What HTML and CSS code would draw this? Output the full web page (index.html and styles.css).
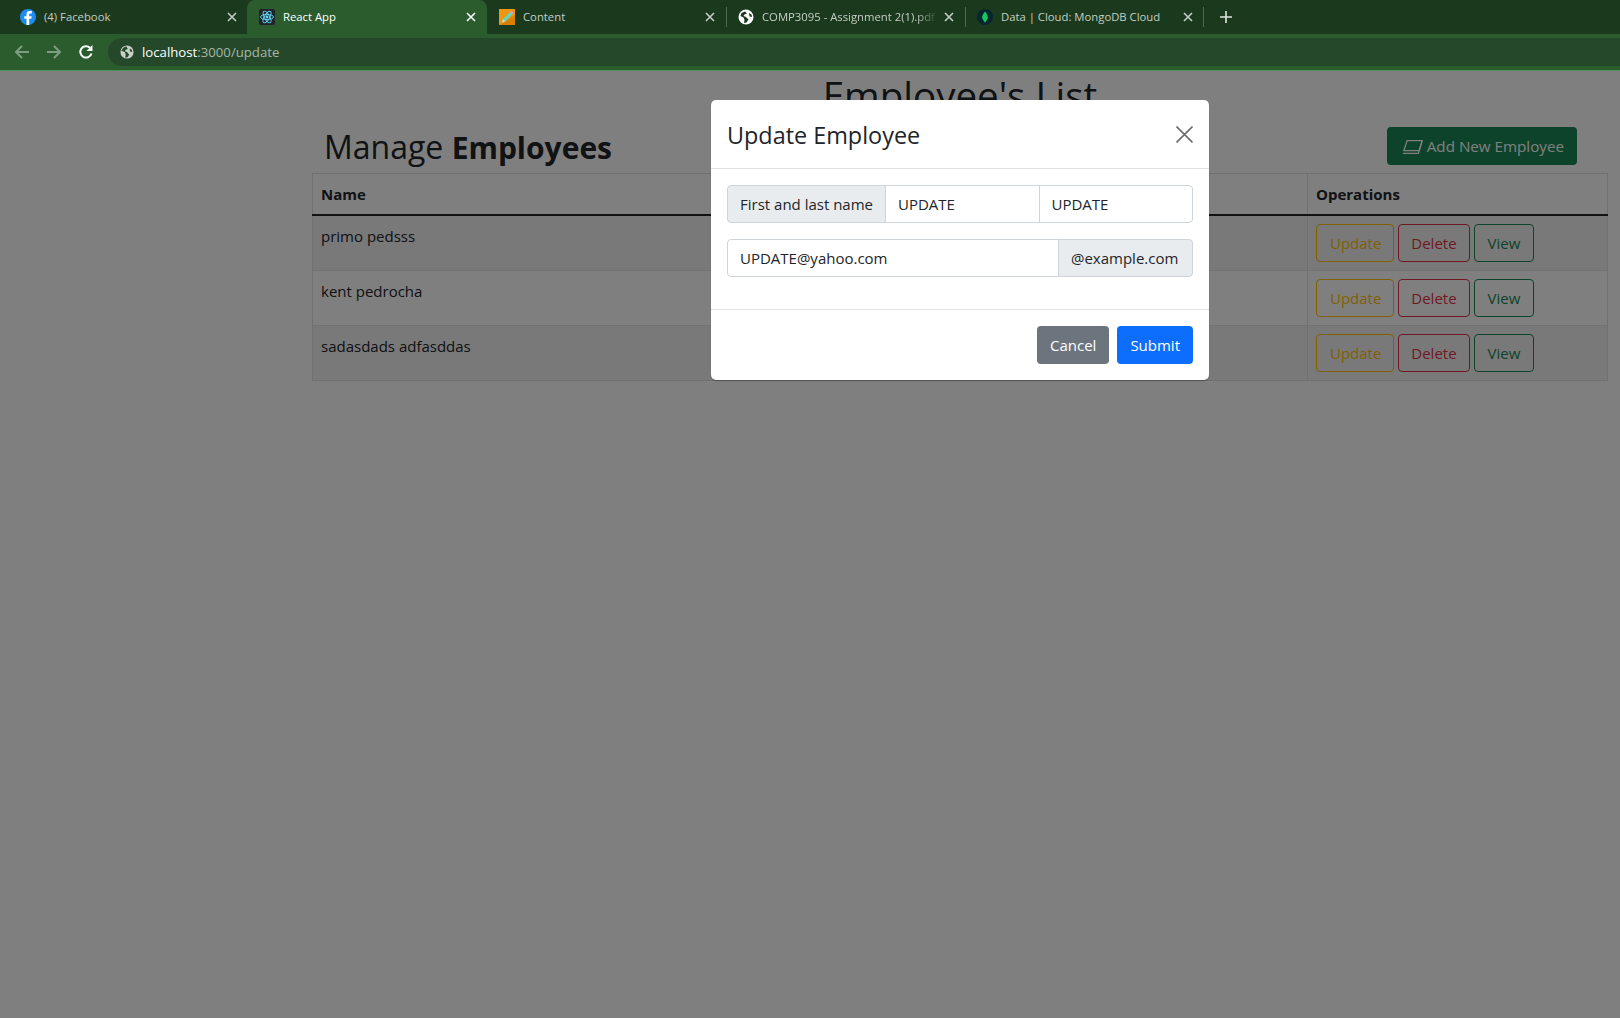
FILE: index.html
```html
<!DOCTYPE html>
<html lang="en">
<head>
    <meta charset="UTF-8">
    <title>React App</title>
    <link rel="stylesheet" href="styles.css">
</head>
<body>

<div class="tabstrip">
    <div class="tab tab-first">
        <svg class="favicon" viewBox="0 0 16 16"><circle cx="8" cy="8" r="8" fill="#1b8cf2"/><path d="M9.200 16V9.800h2.100l.4-2.600H9.200V5.700c0-.8.3-1.300 1.400-1.300h1.200V2.100c-.4 0-1.200-.1-2-.1C7.900 2 6.500 3.100 6.500 5.300v1.900H4.300v2.600h2.200V16z" fill="#fff"/></svg>
        <span class="tab-title">(4) Facebook</span>
        <svg class="tab-close" viewBox="0 0 10 10"><path d="M1 1l8 8M9 1l-8 8"/></svg>
    </div>
    <div class="tab tab-active">
        <svg class="favicon" viewBox="0 0 16 16"><rect width="16" height="16" rx="2" fill="#20232a"/><g fill="none" stroke="#61dafb" stroke-width=".9"><ellipse cx="8" cy="8" rx="6.500" ry="2.600"/><ellipse cx="8" cy="8" rx="6.500" ry="2.600" transform="rotate(60 8 8)"/><ellipse cx="8" cy="8" rx="6.500" ry="2.600" transform="rotate(120 8 8)"/></g><circle cx="8" cy="8" r="1.400" fill="#61dafb"/></svg>
        <span class="tab-title">React App</span>
        <svg class="tab-close" viewBox="0 0 10 10"><path d="M1 1l8 8M9 1l-8 8"/></svg>
    </div>
    <div class="tab">
        <svg class="favicon" viewBox="0 0 16 16"><rect width="16" height="16" fill="#f0960f"/><path d="M0 16L16 6v10z" fill="#d97f08"/><path d="M3 13.500l1-3.300L11 3l2.300 2.300-7 7.100z" fill="#63d6c0"/><path d="M11 3l1.300-1.200 2.200 2.200-1.200 1.300z" fill="#c9a0e8"/><path d="M3 13.500l1-3.300 2.300 2.200z" fill="#f6d8b0"/></svg>
        <span class="tab-title">Content</span>
        <svg class="tab-close" viewBox="0 0 10 10"><path d="M1 1l8 8M9 1l-8 8"/></svg>
    </div>
    <div class="tab tab-sep">
        <svg class="favicon" viewBox="0 0 16 16"><circle cx="8" cy="8" r="7.500" fill="#fff"/><path d="M7 2.500L3.500 4 2.500 7l3 1.500 1 2.500-.5 3 2.500-.5 2-3-2.500-2.500L5.500 7l1-1.500L9 4.500zM11 4l2.500 1.500.5 2.500-2.500-.5z" fill="#1b3a1d"/></svg>
        <span class="tab-title tab-fade">COMP3095 - Assignment 2(1).pdf</span>
        <svg class="tab-close" viewBox="0 0 10 10"><path d="M1 1l8 8M9 1l-8 8"/></svg>
    </div>
    <div class="tab tab-sep tab-last">
        <svg class="favicon" viewBox="0 0 16 16"><circle cx="8" cy="8" r="8" fill="#06262f"/><path d="M8 2.500C10 5 10.800 6.800 10.800 8.500 10.800 10.500 9 11.800 8.200 13.500H7.800C7 11.800 5.200 10.500 5.200 8.500 5.200 6.800 6 5 8 2.500z" fill="#13c85f"/></svg>
        <span class="tab-title">Data | Cloud: MongoDB Cloud</span>
        <svg class="tab-close" viewBox="0 0 10 10"><path d="M1 1l8 8M9 1l-8 8"/></svg>
    </div>
    <svg class="new-tab" viewBox="0 0 12 12"><path d="M6 0v12M0 6h12"/></svg>
</div>

<div class="toolbar">
    <svg class="nav-icon nav-off" viewBox="0 0 16 16"><path d="M15 8H2M8 2L2 8l6 6"/></svg>
    <svg class="nav-icon nav-off" viewBox="0 0 16 16"><path d="M1 8h13M8 2l6 6-6 6"/></svg>
    <svg class="nav-icon" viewBox="0 0 16 16"><path d="M13.500 9.500A5.700 5.700 0 1 1 12 3.800"/><path class="nav-fill" d="M14.500 1v6h-6z"/></svg>
    <div class="omnibox">
        <svg class="globe" viewBox="0 0 16 16"><circle cx="8" cy="8" r="7.500" fill="#c8d0c8"/><path d="M7 1.500L3.500 3.500 1.500 6.500l4 1.500 1 2.500-.5 4 2.500-.5 2-3L8 8 5.500 7l1-1.500L9 4.500zM11 4l2.500 1.500.5 2.500-2.500-.5z" fill="#26482a"/></svg>
        <span class="url-host">localhost</span><span class="url-rest">:3000/update</span>
    </div>
</div>

<div class="page">
    <div class="content">
        <h1 class="page-title">Employee's List</h1>

        <div class="table-head">
            <h2 class="manage">Manage <b>Employees</b></h2>
            <button class="btn btn-add">
                <svg class="add-icon" viewBox="0 0 19 13"><path d="M4.500 .6h14l-3 9.300H1.500z"/><path d="M.6 12.400h14.400l3.400-11"/></svg>
                Add New Employee
            </button>
        </div>

        <table class="employees">
            <thead>
                <tr><th class="col-name">Name</th><th>Operations</th></tr>
            </thead>
            <tbody id="rows"></tbody>
        </table>
    </div>

    <div class="backdrop"></div>

    <div class="modal">
        <div class="modal-header">
            <h3 class="modal-title">Update Employee</h3>
            <svg class="modal-close" viewBox="0 0 16 16"><path d="M.5 .5l15 15M15.500 .5l-15 15"/></svg>
        </div>
        <div class="modal-body">
            <div class="input-group">
                <span class="addon addon-left">First and last name</span>
                <input class="field field-a" type="text" value="UPDATE">
                <input class="field field-b" type="text" value="UPDATE">
            </div>
            <div class="input-group">
                <input class="field field-email" type="text" value="UPDATE@yahoo.com">
                <span class="addon addon-right">@example.com</span>
            </div>
        </div>
        <div class="modal-footer">
            <button class="btn btn-cancel">Cancel</button>
            <button class="btn btn-submit">Submit</button>
        </div>
    </div>
</div>

<script>
    // Employees shown in the table
    const employees = ['primo pedsss', 'kent pedrocha', 'sadasdads adfasddas'];

    const rows = document.getElementById('rows');
    employees.forEach(name => {
        rows.innerHTML += `
            <tr>
                <td>${name}</td>
                <td class="ops">
                    <button class="btn btn-update">Update</button>
                    <button class="btn btn-delete">Delete</button>
                    <button class="btn btn-view">View</button>
                </td>
            </tr>
        `;
    });
</script>

</body>
</html>
```

FILE: styles.css
```css
* {
    box-sizing: border-box;
}

html, body {
    height: 100%;
}

body {
    margin: 0;
    display: flex;
    flex-direction: column;
    overflow: hidden;
    font-family: 'Open Sans', 'Noto Sans', sans-serif;
    font-size: 15px;
    color: #212529;
    background-color: #fff;
}

/* browser tabs */
.tabstrip {
    height: 34px;
    flex: none;
    display: flex;
    align-items: stretch;
    background-color: #1b3a1d;
}

.tab {
    width: 239px;
    padding: 0 11px 0 12px;
    display: flex;
    align-items: center;
    font-size: 11.300px;
    color: #c3cdc3;
}

.tab-first {
    width: 247px;
    padding: 0 10px 0 20px;
}

.tab-active {
    width: 240px;
    background-color: #2a5c2e;
    border-radius: 8px 8px 0 0;
    color: #fff;
}

.tab-sep {
    position: relative;
}

.tab-sep::before,
.tab-last::after {
    content: '';
    position: absolute;
    top: 7px;
    left: 0;
    width: 1px;
    height: 20px;
    background-color: #4e6a50;
}

.tab-last::after {
    left: auto;
    right: 0;
}

.favicon {
    width: 16px;
    height: 16px;
    flex: none;
    margin-right: 8px;
}

.tab-title {
    flex: 1;
    margin-top: -2px;
    white-space: nowrap;
    overflow: hidden;
}

.tab-fade {
    -webkit-mask-image: linear-gradient(to right, #000 88%, transparent);
    mask-image: linear-gradient(to right, #000 88%, transparent);
}

.tab-close {
    width: 10px;
    height: 10px;
    flex: none;
    margin-left: 6px;
    fill: none;
    stroke: currentColor;
    stroke-width: 1.600;
}

.new-tab {
    width: 12px;
    height: 12px;
    margin: 11px 0 0 16px;
    fill: none;
    stroke: #dfe5df;
    stroke-width: 1.600;
}

/* address bar */
.toolbar {
    height: 37px;
    flex: none;
    display: flex;
    align-items: center;
    padding: 0 0 1px 14px;
    background-color: #2a5c2e;
    border-bottom: 1px solid #4f8f58;
}

.nav-icon {
    width: 16px;
    height: 16px;
    margin-right: 16px;
    fill: none;
    stroke: #fff;
    stroke-width: 2;
}

.nav-off {
    stroke: #7f9c81;
}

.nav-fill {
    fill: #fff;
    stroke: none;
}

.omnibox {
    flex: 1;
    height: 28px;
    margin-left: -2px;
    padding-left: 12px;
    display: flex;
    align-items: center;
    border-radius: 14px 0 0 14px;
    background-color: #26482a;
    font-size: 13.200px;
}

.globe {
    width: 14px;
    height: 14px;
    margin-right: 8px;
}

.url-host {
    color: #fff;
}

.url-rest {
    color: #a7b6a8;
}

/* page under the modal */
.page {
    flex: 1;
    position: relative;
}

.content {
    margin: 0 12px 0 312px;
}

.page-title {
    margin: 0;
    font-size: 38.500px;
    font-weight: 500;
    line-height: 48px;
    text-align: center;
}

.table-head {
    height: 54px;
    display: flex;
    align-items: flex-start;
    justify-content: space-between;
    padding: 0 31px 0 12px;
}

.manage {
    margin: 9px 0 0;
    font-size: 32px;
    font-weight: 500;
    line-height: 38px;
}

.manage b {
    font-size: 30px;
    font-weight: 700;
}

.employees {
    width: 100%;
    border-collapse: collapse;
}

.employees th,
.employees td {
    padding: 10px 8px 6px;
    border: 1px solid #dee2e6;
    text-align: left;
    vertical-align: top;
}

.employees th {
    height: 41px;
    border-bottom: 2px solid #212529;
}

.col-name {
    width: 995px;
}

.employees tbody tr:nth-child(odd) {
    background-color: #f2f2f2;
}

.employees .ops {
    height: 55px;
    padding: 8px;
}

.btn {
    display: inline-block;
    padding: 6px 12px;
    border: 1px solid transparent;
    border-radius: 4px;
    background: none;
    font-family: inherit;
    font-size: 15px;
    line-height: 24px;
}

.btn-add {
    margin-top: 8px;
    padding: 6px 12px 6px 14px;
    font-size: 15.200px;
    background-color: #198754;
    color: #fff;
}

.add-icon {
    width: 21px;
    height: 14px;
    fill: none;
    stroke: currentColor;
    stroke-width: 1.200;
    vertical-align: -2px;
}

.btn-update {
    padding: 6px 12px 6px 13px;
    border-color: #ffc107;
    color: #ffc107;
}

.btn-delete {
    border-color: #dc3545;
    color: #dc3545;
}

.btn-view {
    padding: 6px 13px;
    border-color: #198754;
    color: #198754;
}

.backdrop {
    position: absolute;
    inset: 0;
    background-color: rgba(0, 0, 0, 0.5);
}

/* update dialog */
.modal {
    position: absolute;
    top: 29px;
    left: 711px;
    width: 498px;
    background-color: #fff;
    border-radius: 5px;
    box-shadow: 0 1px 1px rgba(0, 0, 0, 0.3);
}

.modal-header {
    height: 69px;
    padding: 0 16px;
    display: flex;
    align-items: center;
    justify-content: space-between;
    border-bottom: 1px solid #dee2e6;
}

.modal-title {
    margin: 2px 0 0;
    font-size: 23.400px;
    font-weight: 500;
}

.modal-close {
    width: 17px;
    height: 17px;
    fill: none;
    stroke: #6c6c6c;
    stroke-width: 1.500;
}

.modal-body {
    padding: 16px;
    height: 141px;
    border-bottom: 1px solid #dee2e6;
}

.input-group {
    display: flex;
    height: 38px;
    margin-bottom: 16px;
}

.addon {
    padding: 0 12px;
    display: flex;
    align-items: center;
    flex: none;
    background-color: #e9ecef;
    border: 1px solid #ced4da;
    white-space: nowrap;
}

.addon-left {
    width: 159px;
    border-radius: 4px 0 0 4px;
}

.addon-right {
    width: 135px;
    border-radius: 0 4px 4px 0;
    margin-left: -1px;
}

.field {
    flex: 1;
    min-width: 0;
    padding: 0 12px;
    border: 1px solid #ced4da;
    margin-left: -1px;
    font-family: inherit;
    font-size: 15px;
    color: #212529;
    background-color: #fff;
}

.field-b {
    border-radius: 0 4px 4px 0;
}

.field-email {
    margin-left: 0;
    border-radius: 4px 0 0 4px;
}

.modal-footer {
    height: 70px;
    padding: 0 16px;
    display: flex;
    align-items: center;
    justify-content: flex-end;
    gap: 8px;
}

.btn-cancel {
    background-color: #6c757d;
    color: #fff;
}

.btn-submit {
    background-color: #0d6efd;
    color: #fff;
}
```
